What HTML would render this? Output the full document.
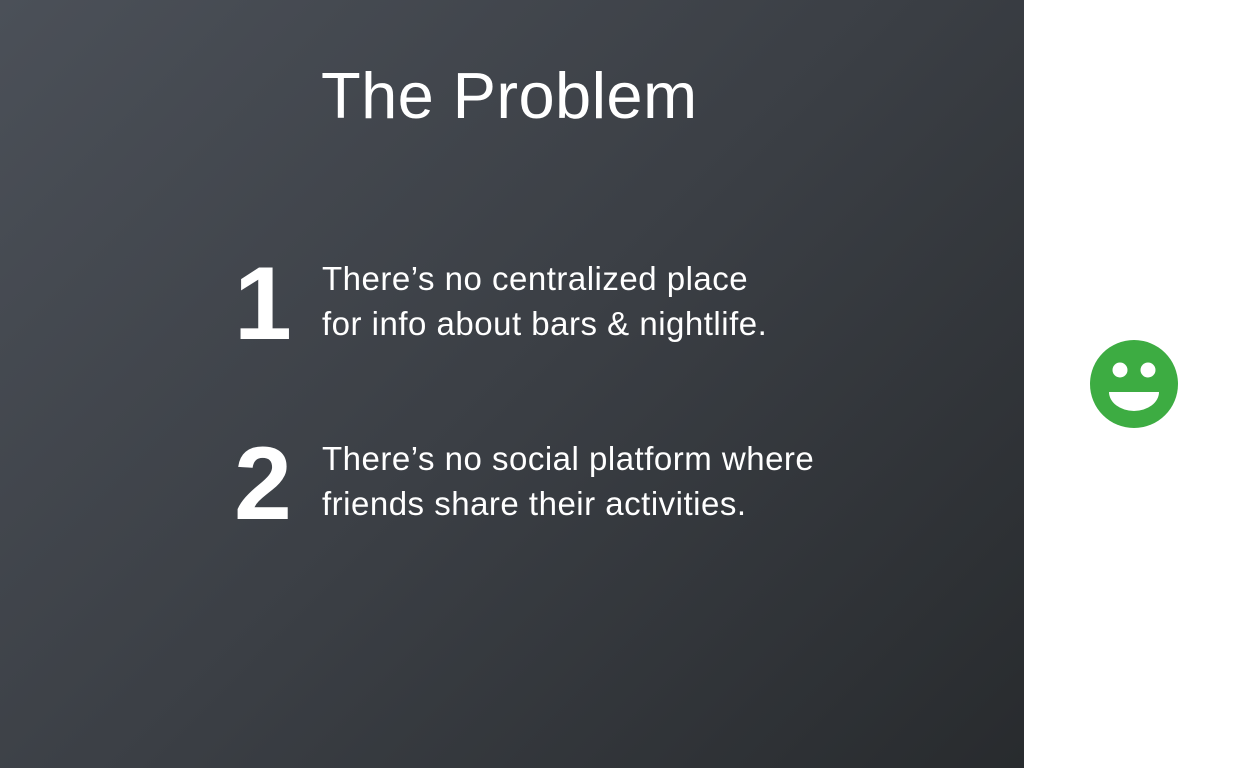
<!DOCTYPE html>
<html><head><meta charset="utf-8"><style>
html,body{margin:0;padding:0;width:1243px;height:768px;overflow:hidden;background:#fff;font-family:"Liberation Sans",sans-serif}
.panel{position:absolute;left:0;top:0;width:1024px;height:768px;background:linear-gradient(135deg,#4b5058 0%,#3b3f45 50%,#282b2e 100%);color:#fff}
.t{position:absolute;left:321px;top:58px;font-size:65px;line-height:76px;letter-spacing:0.4px}
.n{position:absolute;font-weight:bold;font-size:104px;line-height:104px}
.p{position:absolute;left:322px;font-size:33px;line-height:45px;letter-spacing:0.5px}
</style></head><body>
<div class="panel">
<div class="t">The Problem</div>
<div class="n" style="left:234px;top:252px">1</div>
<div class="p" style="top:256px">There’s no centralized place<br>for info about bars &amp; nightlife.</div>
<div class="n" style="left:234px;top:432px">2</div>
<div class="p" style="top:436px">There’s no social platform where<br>friends share their activities.</div>
</div>
<svg style="position:absolute;left:0;top:0" width="1243" height="768">
<circle cx="1134" cy="384" r="44" fill="#3dac42"/>
<circle cx="1120" cy="370" r="7.5" fill="#fff"/>
<circle cx="1148" cy="370" r="7.5" fill="#fff"/>
<path d="M1109 392 H1159 A25 19 0 0 1 1109 392 Z" fill="#fff"/>
</svg>
</body></html>
